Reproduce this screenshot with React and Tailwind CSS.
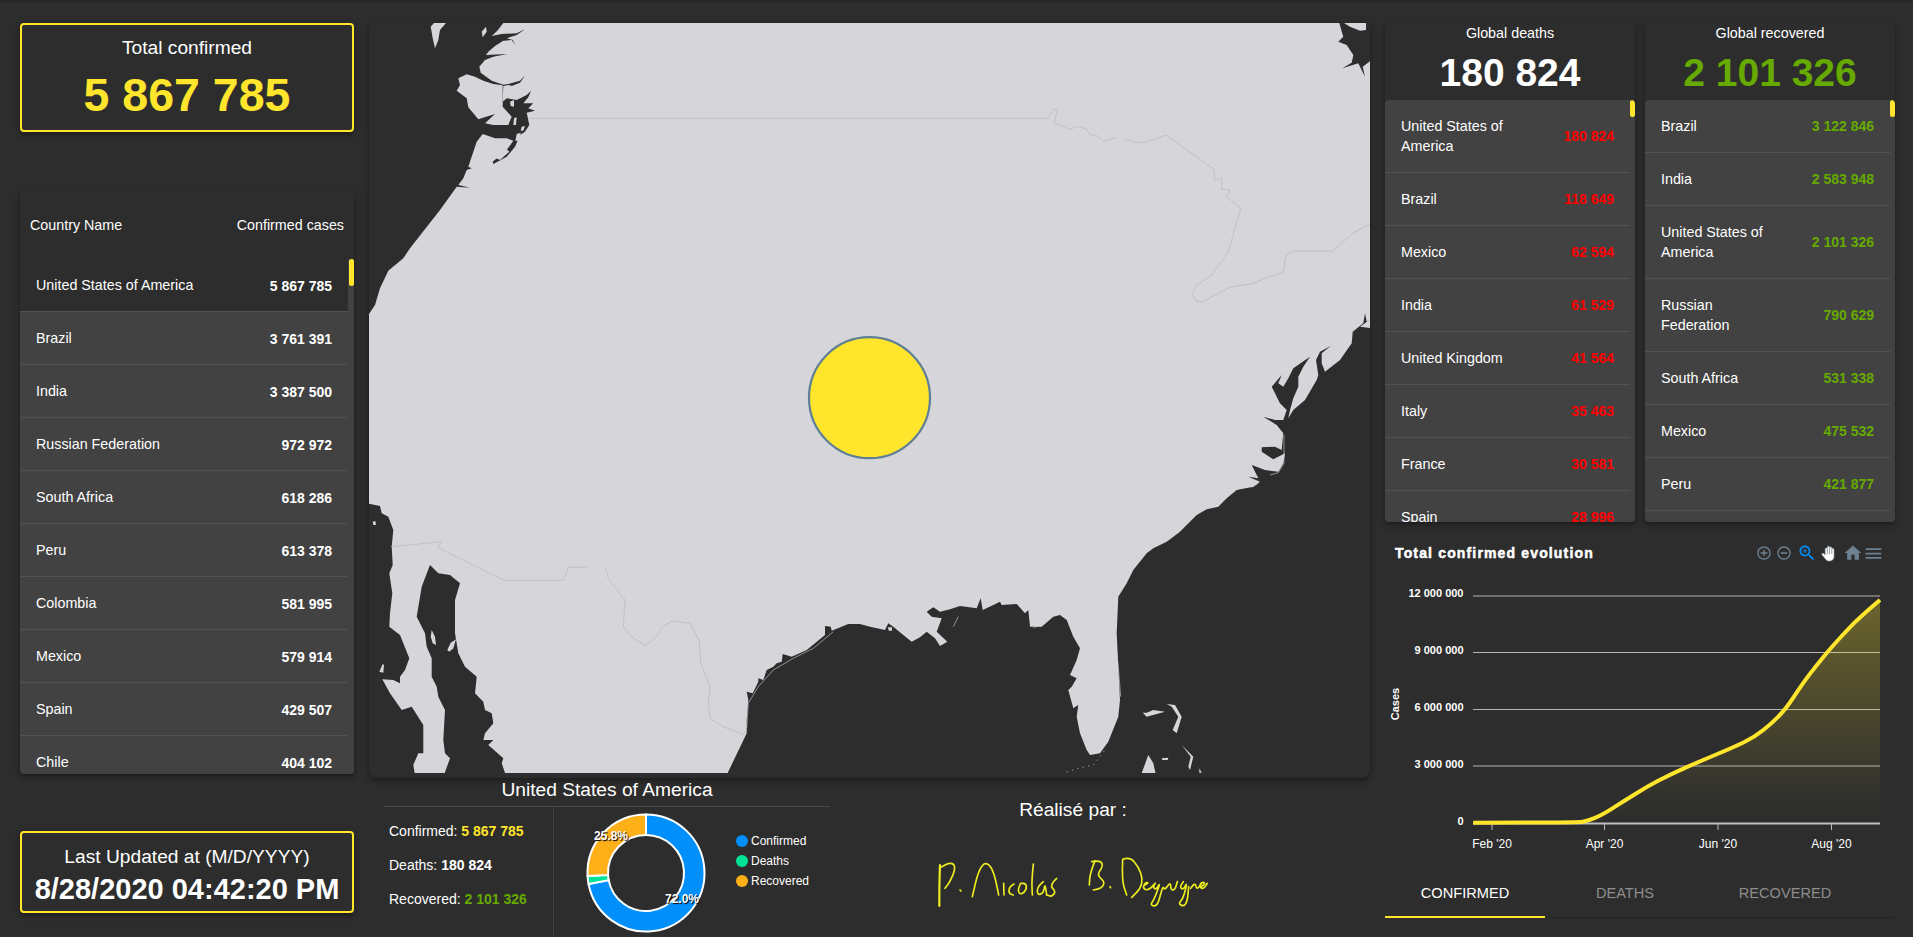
import React from 'react';

const z = (ox, oy, s) =>
  s.trim().split(/\s+/).map((p) => {
    const [a, b] = p.split(',').map(Number);
    return `${(ox + a / 3).toFixed(1)},${(oy + b / 3).toFixed(1)}`;
  }).join(' ');
const z6 = (s) => z(360, 10, s);
const z7 = (s) => z(360, 400, s);
const z8 = (s) => z(860, 10, s);
const z9 = (s) => z(860, 400, s);

const WATER = '#2d2d2d';
const LAND = '#d5d5da';
const YELLOW = '#ffe52c';
const BORDER = '#b2b2b7';

const waterShapes = [
  z6(`20,30 378,30 378,39 430,39 412,62 395,78 425,72 470,70 495,58 470,75 440,85 458,90 466,105 455,90 430,92 405,108 385,125 378,135 442,132 400,140 375,150 358,170 362,188 395,212 430,224 445,222 480,212 496,195 480,218 455,228 445,225 430,228 428,275 440,265 470,270 500,255 513,242 505,262 490,280 520,280 505,295 525,302 500,308 508,345 495,365 480,375 465,410 440,440 400,462 398,455 440,420 460,392 440,385 405,385 368,372 350,395 325,470 335,475 320,480 310,505 295,525 330,533 290,530 240,600 150,715 130,745 85,782 60,835 45,885 27,912 20,912`),
  z7(`20,310 60,318 65,340 85,350 100,390 95,440 98,495 88,520 97,580 90,640 88,680 120,705 148,775 135,810 120,830 120,850 100,840 67,838 90,880 125,930 155,920 190,975 190,1060 175,1060 160,1095 165,1125 20,1125`),
  z7(`210,495 235,520 270,525 300,550 285,600 285,700 295,760 315,800 350,830 345,880 370,905 375,930 395,940 400,970 375,1000 370,1020 400,1020 385,1035 430,1075 425,1090 437,1125 252,1125 270,1075 255,1060 250,1020 255,930 235,890 230,860 215,830 215,775 200,740 195,700 170,650 185,560`),
  z7(`1100,1125 1160,1000 1160,960 1165,900 1160,875 1178,880 1195,845 1195,835 1210,840 1220,810 1240,800 1250,790 1265,785 1268,762 1295,770 1340,750 1395,705 1395,678 1412,680 1415,692 1465,672`) + ' ' +
    z9(`0,672 30,680 75,690 85,670 100,680 130,705 155,725 180,712 200,695 225,715 240,738 262,725 230,695 245,655 215,650 200,635 220,622 240,635 270,628 300,618 350,625 362,595 368,630 400,615 420,605 425,615 470,612 495,640 505,630 510,680 545,680 580,650 600,645 620,660 640,710 660,745 650,780 630,825 650,835 635,860 625,870 640,925 655,915 650,950 660,1000 680,1050 690,1065 720,1060 745,1025 775,950 780,900 775,800 770,700 775,590 800,550 820,510 860,460 880,445 920,425 960,395 980,375 1010,345 1040,328 1075,320 1100,295 1130,270 1180,260 1200,245 1165,230 1195,235 1175,195 1215,210 1255,215 1270,190 1275,160 1240,178 1205,155 1205,142 1245,140 1265,150 1270,100 1250,75 1210,50 1245,60 1270,60 1280,30 1260,10`) + ' ' +
    z8(`1255,1170 1245,1150 1235,1130 1265,1095 1255,1120 1270,1130 1285,1105 1300,1075 1350,1040 1330,1070 1315,1100 1315,1130 1300,1165 1290,1200`) + ' ' +
    z9(`1285,55 1300,30 1335,0`) + ' ' +
    z8(`1370,1110 1375,1095 1368,1050 1380,1025 1412,1008 1385,1030 1385,1060 1395,1085 1440,1050 1475,1000 1478,965 1510,940 1515,910 1520,935 1535,925 1500,950 1535,955 1535,1800`) + ' 1375,775',
  z8(`1438,30 1438,39 1450,80 1435,95 1460,105 1480,135 1475,158 1447,175 1495,160 1515,200 1508,170 1535,150 1535,30`),
];

const landShapes = [
  z6(`212,50 222,39 258,39 240,60 235,90 225,115 218,85`),
  z6(`365,65 378,50 380,65 368,82`),
  z6(`295,205 320,193 345,200 370,212 400,222 428,226 428,290 455,320 445,345 400,345 375,340 405,312 355,328 325,292 320,265 290,242 300,225`),
  z6(`442,235 452,225 456,250 445,255`),
  z6(`450,275 462,270 462,290 452,288`),
  z6(`462,325 470,322 468,345 460,345`),
  z6(`485,350 495,348 490,362 482,362`),
  z6(`470,372 482,368 478,392 466,392`),
  z6(`408,445 440,418 448,425 420,450`),
  z7(`38,365 46,363 48,375 40,375`),
  z7(`58,815 68,792 72,795 70,818`),
  z7(`215,690 225,710 228,735 218,730 212,710`),
  z7(`262,750 272,728 288,718 280,745 268,755`),
  z8(`1452,30 1518,30 1518,60 1500,62 1470,50 1452,39`),
  z9(`848,938 860,950 915,935 880,930 860,938`),
  z9(`920,912 945,915 965,950 950,1000 938,990 955,950 935,920`),
  z9(`965,1035 1000,1070 990,1110 985,1100 992,1070`),
  z9(`843,1125 865,1065 880,1090 888,1125`),
  z9(`905,1075 925,1073 923,1080 907,1080`),
  z9(`1018,1105 1025,1118 1018,1118`),
  z9(`84,682 96,682 96,692 86,692`),
];

const landLines = [
  z7(`1160,985 1165,910 1195,860 1240,810 1300,775 1360,745 1420,695`),
  z9(`1272,105 1272,190 1255,218 1230,225`),
  z9(`1195,250 1175,262`),
  z9(`770,760 775,800 782,890`),
  z9(`295,650 280,680`),
  z9(`520,683 545,675`),
];

const borderLines = [
  z6(`505,325 1500,325`),
  z8(`0,325 565,325 580,298 592,300 582,340 615,350 625,358 655,350 680,358 690,375 708,375 730,395 770,382`),
  z8(`795,390 810,390 815,397 855,397 918,375 1062,478 1063,510 1085,505 1085,538 1110,540 1100,560 1142,595 1105,725 1052,798 1010,825 995,850 1010,875 1028,875 1110,832 1180,820 1270,785 1278,735 1305,723 1418,723 1480,668 1530,642`),
  z7(`92,440 245,425 235,443 432,541 610,541 625,502 680,502`),
  z7(`737,505 745,535 795,600 790,680 815,710 855,737 885,715 910,678 937,663 990,670 1018,722 1022,790 1050,860 1045,905 1050,955 1090,980 1145,1002 1160,995`),
];

const smooth = (s) => {
  const pts = s.trim().split(/\s+/).map((p) => p.split(',').map(Number));
  let d = `M${pts[0][0]} ${pts[0][1]}`;
  for (let i = 1; i < pts.length - 1; i++) {
    const mx = (pts[i][0] + pts[i + 1][0]) / 2;
    const my = (pts[i][1] + pts[i + 1][1]) / 2;
    d += ` Q${pts[i][0]} ${pts[i][1]} ${mx} ${my}`;
  }
  const l = pts[pts.length - 1];
  return d + ` L${l[0]} ${l[1]}`;
};

const signature = [
  '120,75 118,130 118,198',
  '118,85 140,70 162,70 165,90 150,125 135,145',
  '180,150 183,153',
  '217,170 228,120 240,85 255,68 272,78 285,110 296,165',
  '311,130 312,165',
  '342,132 328,140 326,160 340,165',
  '362,130 352,150 362,165 380,150 378,130 362,130',
  '400,72 395,120 397,165',
  '430,125 412,140 412,165 430,160 435,130 440,165',
  '470,115 448,135 468,155 455,170 440,165',
  '585,62 570,100 568,135',
  '575,65 600,60 610,78 590,105 615,125 605,145 580,150',
  '630,140 632,143',
  '668,60 665,120 680,165',
  '668,58 690,50 715,80 728,115 722,145 695,172',
  '735,135 748,128 735,128 728,145 745,152 770,125 758,140 768,150 782,125 762,180 750,195 772,200 785,150 790,140 795,150 812,125 812,150 825,150 832,125',
  '850,125 838,140 850,150 862,125 850,175 835,190 850,200 862,185 866,140',
  '872,145 885,125 890,150 905,130',
  '905,140 918,130 905,125 898,140 910,148 922,130',
];

const left = [
  ['United States of America', '5 867 785'], ['Brazil', '3 761 391'], ['India', '3 387 500'],
  ['Russian Federation', '972 972'], ['South Africa', '618 286'], ['Peru', '613 378'],
  ['Colombia', '581 995'], ['Mexico', '579 914'], ['Spain', '429 507'], ['Chile', '404 102'],
];
const deaths = [
  ['United States of America', '180 824'], ['Brazil', '118 649'], ['Mexico', '62 594'], ['India', '61 529'],
  ['United Kingdom', '41 564'], ['Italy', '35 463'], ['France', '30 581'], ['Spain', '28 996'],
];
const recovered = [
  ['Brazil', '3 122 846'], ['India', '2 583 948'], ['United States of America', '2 101 326'],
  ['Russian Federation', '790 629'], ['South Africa', '531 338'], ['Mexico', '475 532'], ['Peru', '421 877'],
];

const shadow = 'shadow-[0_2px_4px_-1px_rgba(0,0,0,0.2),0_4px_5px_0_rgba(0,0,0,0.14),0_1px_10px_0_rgba(0,0,0,0.12)]';

function SideList({ title, value, rows, valueClass, rowClass }) {
  return (
    <div className={`w-[250px] h-[499px] flex flex-col rounded overflow-hidden ${shadow}`}>
      <div className="h-[77px] shrink-0 flex flex-col items-center">
        <div className="text-[14.3px] leading-5">{title}</div>
        <div className={`text-[39px] leading-[45px] mt-[7px] font-bold ${valueClass}`}>{value}</div>
      </div>
      <div className="relative flex-1 overflow-hidden bg-[#424242] rounded-t">
        <div className="absolute right-0 top-0 w-[5px] h-[17px] rounded-sm bg-[#ffe52c]" />
        <div className="mr-[5px]">
          {rows.map(([n, v]) => (
            <div key={n} className="flex items-center justify-between pl-4 pr-4 py-4 border-b border-[#525252] text-[14.3px] leading-5">
              <span className="max-w-[112px]">{n}</span>
              <span className={`font-bold text-sm ${rowClass}`}>{v}</span>
            </div>
          ))}
        </div>
      </div>
    </div>
  );
}

const cx = (x) => +(1370 + x / 2.888).toFixed(1);
const cy = (y) => +(500 + y / 3).toFixed(1);
const linePts = [[298,968],[600,968],[630,962],[670,945],[730,905],[800,860],[870,822],[950,785],[1050,742],[1110,712],[1160,670],[1200,628],[1250,550],[1290,495],[1330,445],[1400,365],[1473,300]];
const lineD = smooth(linePts.map(([x, y]) => `${cx(x)},${cy(y)}`).join(' '));
const yTicks = [['12 000 000', 596, 593], ['9 000 000', 652.5, 650], ['6 000 000', 709.5, 707], ['3 000 000', 766, 764]];
const xTicks = [["Feb '20", 1492], ["Apr '20", 1604.5], ["Jun '20", 1718], ["Aug '20", 1831.5]];

function arc(cxx, cyy, r0, r1, a0, a1) {
  const pt = (r, a) => [cxx + r * Math.sin(a), cyy - r * Math.cos(a)];
  const [x0, y0] = pt(r1, a0), [x1, y1] = pt(r1, a1), [x2, y2] = pt(r0, a1), [x3, y3] = pt(r0, a0);
  const large = a1 - a0 > Math.PI ? 1 : 0;
  return `M${x0} ${y0} A${r1} ${r1} 0 ${large} 1 ${x1} ${y1} L${x2} ${y2} A${r0} ${r0} 0 ${large} 0 ${x3} ${y3} Z`;
}
const T = Math.PI * 2;

const Ic = ({ d, size, color = '#6e8192' }) => (
  <svg width={size} height={size} viewBox="0 0 24 24" fill={color} className="shrink-0"><path d={d} /></svg>
);

const HandIcon = () => (
  <svg width="16" height="17" viewBox="0 0 16 17" className="shrink-0">
    <path d="M4.2 9V4.2a1.1 1.1 0 0 1 2.2 0V2.4a1.1 1.1 0 0 1 2.2 0v.6a1.1 1.1 0 0 1 2.2 0v1.6a1.1 1.1 0 0 1 2.2 0v7c0 2.6-1.8 4.4-4.2 4.4H8c-1.6 0-2.7-.7-3.6-2L1 9.8c-.7-1 .7-2.1 1.6-1.2L4.2 10z" fill="#fff" stroke="#9aa3ab" strokeWidth="0.6" />
    <path d="M6.4 4.2V9M8.6 3V9M10.8 4.6V9" fill="none" stroke="#7d8790" strokeWidth="0.8" />
  </svg>
);

export default function App() {
  return (
    <div className="w-[1913px] h-[937px] overflow-hidden bg-[#2d2d2d] text-white border-t-2 border-[#262626] pt-[21px] flex font-['Liberation_Sans',Arial,sans-serif]">
      {/* left column */}
      <div className="ml-[20px] w-[334px] shrink-0 flex flex-col">
        <div className={`h-[109px] border-2 border-[#ffe52c] rounded flex flex-col items-center ${shadow}`}>
          <div className="text-[19.2px] leading-6 mt-[11px]">Total confirmed</div>
          <div className="text-[46.5px] leading-[52px] font-bold text-[#ffe52c] mt-[9px]">5 867 785</div>
        </div>
        <div className={`mt-[59px] h-[583px] rounded flex flex-col overflow-hidden ${shadow}`}>
          <div className="h-[68px] shrink-0 flex items-center justify-between px-[10px] pt-[1px] text-[14.3px]">
            <span>Country Name</span><span>Confirmed cases</span>
          </div>
          <div className="relative flex-1 overflow-hidden bg-[#424242]">
            <div className="absolute right-0 top-0 w-[5px] h-[27px] rounded-sm bg-[#ffe52c]" />
            <div className="mr-[6px]">
              {left.map(([n, v], i) => (
                <div key={n} className={`flex items-center justify-between pl-4 pr-4 pt-[1px] h-[53px] border-b border-[#525252] text-[14.3px] ${i === 0 ? 'bg-[#2d2d2d]' : ''}`}>
                  <span>{n}</span><span className="font-bold text-sm">{v}</span>
                </div>
              ))}
            </div>
          </div>
        </div>
        <div className={`mt-[57px] h-[82px] border-2 border-[#ffe52c] rounded flex flex-col items-center ${shadow}`}>
          <div className="text-[19.2px] leading-6 mt-[12px]">Last Updated at (M/D/YYYY)</div>
          <div className="text-[29px] leading-[34px] font-bold mt-[3px]">8/28/2020 04:42:20 PM</div>
        </div>
      </div>

      {/* centre column */}
      <div className="ml-[15px] w-[1001px] shrink-0 flex flex-col">
        <div className={`h-[755px] shrink-0 rounded-b-lg ${shadow}`}>
          <svg width="1001" height="750" viewBox="369 23 1001 750" className="block">
            <rect x="369" y="23" width="1001" height="750" fill={LAND} />
            {waterShapes.map((p, i) => <polygon key={i} points={p} fill={WATER} />)}
            {landShapes.map((p, i) => <polygon key={i} points={p} fill={LAND} />)}
            {landLines.map((p, i) => <polyline key={i} points={p} fill="none" stroke={LAND} strokeWidth="0.6" />)}
            <polyline points={z9(`620,1116 655,1105 700,1095 735,1050`)} fill="none" stroke={LAND} strokeWidth="0.6" strokeDasharray="1.5 4" />
            {borderLines.map((p, i) => <polyline key={i} points={p} fill="none" stroke={BORDER} strokeWidth="0.6" />)}
            <circle cx="869.5" cy="397.7" r="60.5" fill={YELLOW} stroke="#5f7f94" strokeWidth="2.2" />
          </svg>
        </div>
        <div className="flex flex-1 min-h-0">
          <div className="ml-[15px] w-[446px] shrink-0 flex flex-col">
            <div className="h-[29px] shrink-0 border-b border-[#4a4a4a] text-center text-[19.2px] leading-[24px]">United States of America</div>
            <div className="flex flex-1">
              <div className="w-[170px] shrink-0 border-r border-[#424242] pl-[5px] pt-[14px] flex flex-col gap-[14px] text-sm leading-5">
                <div>Confirmed: <b className="text-[#ffe52c]">5 867 785</b></div>
                <div>Deaths: <b>180 824</b></div>
                <div>Recovered: <b className="text-[#66aa00]">2 101 326</b></div>
              </div>
              <svg width="130" height="130" viewBox="0 0 130 130" className="ml-[27px] shrink-0 block">
                <path d={arc(65, 66, 38, 58.5, 0, 0.72 * T)} fill="#008ffb" stroke="#fff" strokeWidth="2" />
                <path d={arc(65, 66, 38, 58.5, 0.72 * T, 0.742 * T)} fill="#00e396" stroke="#fff" strokeWidth="2" />
                <path d={arc(65, 66, 38, 58.5, 0.742 * T, T)} fill="#feb019" stroke="#fff" strokeWidth="2" />
                <text x="101" y="96" textAnchor="middle" fontSize="12" fontWeight="700" fill="#fff" style={{ textShadow: '1px 1px 1px #000' }}>72.0%</text>
                <text x="30" y="33" textAnchor="middle" fontSize="12" fontWeight="700" fill="#fff" style={{ textShadow: '1px 1px 1px #000' }}>25.8%</text>
              </svg>
              <div className="ml-[25px] mt-[24px] flex flex-col text-xs leading-5">
                {[['Confirmed', 'bg-[#008ffb]'], ['Deaths', 'bg-[#00e396]'], ['Recovered', 'bg-[#feb019]']].map(([n, c]) => (
                  <div key={n} className="flex items-center gap-[3px] h-5">
                    <span className={`w-3 h-3 rounded-full ${c}`} /><span>{n}</span>
                  </div>
                ))}
              </div>
            </div>
          </div>
          <div className="w-[480px] shrink-0 flex flex-col items-center">
            <div className="text-[19.2px] leading-6 mt-[20px] pl-[6px]">Réalisé par :</div>
            <svg width="340" height="90" viewBox="0 0 1020 270" className="block mt-[18px]">
              {signature.map((s, i) => (
                <path key={i} d={smooth(s)} fill="none" stroke="#ecec20" strokeWidth={i === 0 ? 6.5 : 5} strokeLinecap="round" strokeLinejoin="round" />
              ))}
            </svg>
          </div>
        </div>
      </div>

      {/* right column */}
      <div className="ml-[15px] w-[510px] shrink-0 flex flex-col">
        <div className="flex gap-[10px]">
          <SideList title="Global deaths" value="180 824" rows={deaths} valueClass="text-white" rowClass="text-[#ff0000]" />
          <SideList title="Global recovered" value="2 101 326" rows={recovered} valueClass="text-[#66aa00]" rowClass="text-[#66aa00]" />
        </div>
        <div className="flex items-center justify-between pt-[14px] h-[48px] pl-[10px] pr-[11px] shrink-0">
          <span className="text-sm font-black tracking-[1.15px]" style={{ WebkitTextStroke: '0.5px #fff' }}>Total confirmed evolution</span>
          <div className="flex items-center">
            <Ic size={16} d="M13 7h-2v4H7v2h4v4h2v-4h4v-2h-4V7zm-1-5C6.48 2 2 6.48 2 12s4.48 10 10 10 10-4.48 10-10S17.52 2 12 2zm0 18c-4.41 0-8-3.59-8-8s3.59-8 8-8 8 3.59 8 8-3.59 8-8 8z" />
            <span className="w-1" />
            <Ic size={16} d="M7 11v2h10v-2H7zm5-9C6.48 2 2 6.48 2 12s4.48 10 10 10 10-4.48 10-10S17.52 2 12 2zm0 18c-4.41 0-8-3.59-8-8s3.59-8 8-8 8 3.59 8 8-3.59 8-8 8z" />
            <span className="w-[5px]" />
            <Ic size={20} color="#008ffb" d="M15.5 14h-.79l-.28-.27C15.41 12.59 16 11.11 16 9.5 16 5.91 13.09 3 9.5 3S3 5.91 3 9.5 5.91 16 9.5 16c1.61 0 3.09-.59 4.23-1.57l.27.28v.79l5 4.99L20.49 19l-4.99-5zm-6 0C7.01 14 5 11.99 5 9.5S7.01 5 9.5 5 14 7.01 14 9.5 11.99 14 9.5 14zM12 10h-2v2H9v-2H7V9h2V7h1v2h2v1z" />
            <span className="w-1" />
            <HandIcon />
            <span className="w-[6px]" />
            <Ic size={20} d="M10 20v-6h4v6h5v-8h3L12 3 2 12h3v8z" />
            <Ic size={21} d="M3 18h18v-2H3v2zm0-5h18v-2H3v2zm0-7v2h18V6H3z" />
          </div>
        </div>
        <svg width="510" height="300" viewBox="1385 570 510 300" className="block shrink-0">
          <defs>
            <linearGradient id="area" x1="0" y1="0" x2="0" y2="1">
              <stop offset="0" stopColor={YELLOW} stopOpacity="0.3" />
              <stop offset="0.85" stopColor={YELLOW} stopOpacity="0.03" />
              <stop offset="1" stopColor={YELLOW} stopOpacity="0" />
            </linearGradient>
          </defs>
          {yTicks.map(([t, y, ty]) => (
            <g key={t}>
              <line x1="1473" x2="1880" y1={y} y2={y} stroke="#b4b4b4" strokeWidth="1" />
              <text x="1463.5" y={ty + 4} textAnchor="end" fontSize="11" fontWeight="700" fill="#fff">{t}</text>
            </g>
          ))}
          <text x="1463.5" y="825" textAnchor="end" fontSize="11" fontWeight="700" fill="#fff">0</text>
          <path d={`${lineD} L1880 823 L1473 823 Z`} fill="url(#area)" />
          <line x1="1473" x2="1880" y1="823.5" y2="823.5" stroke="#bdbdbd" strokeWidth="2" />
          {xTicks.map(([t, x]) => (
            <g key={t}>
              <line x1={x} x2={x} y1="824" y2="830" stroke="#bdbdbd" strokeWidth="1" />
              <text x={x} y="848" textAnchor="middle" fontSize="12" fill="#fff">{t}</text>
            </g>
          ))}
          <path d={lineD} fill="none" stroke={YELLOW} strokeWidth="4" strokeLinecap="butt" strokeLinejoin="round" />
          <text transform="translate(1399 704) rotate(-90)" textAnchor="middle" fontSize="11" fontWeight="700" fill="#fff">Cases</text>
        </svg>
        <div className="flex h-[48px] shrink-0 border-b border-[#242424] text-[14.6px]">
          <div className="w-[160px] flex items-center justify-center border-b-2 border-[#ffe52c] h-[48px] pt-[1px]">CONFIRMED</div>
          <div className="w-[160px] flex items-center justify-center text-[#8e8e8e] pt-[1px]">DEATHS</div>
          <div className="w-[160px] flex items-center justify-center text-[#8e8e8e] pt-[1px]">RECOVERED</div>
        </div>
      </div>
    </div>
  );
}
